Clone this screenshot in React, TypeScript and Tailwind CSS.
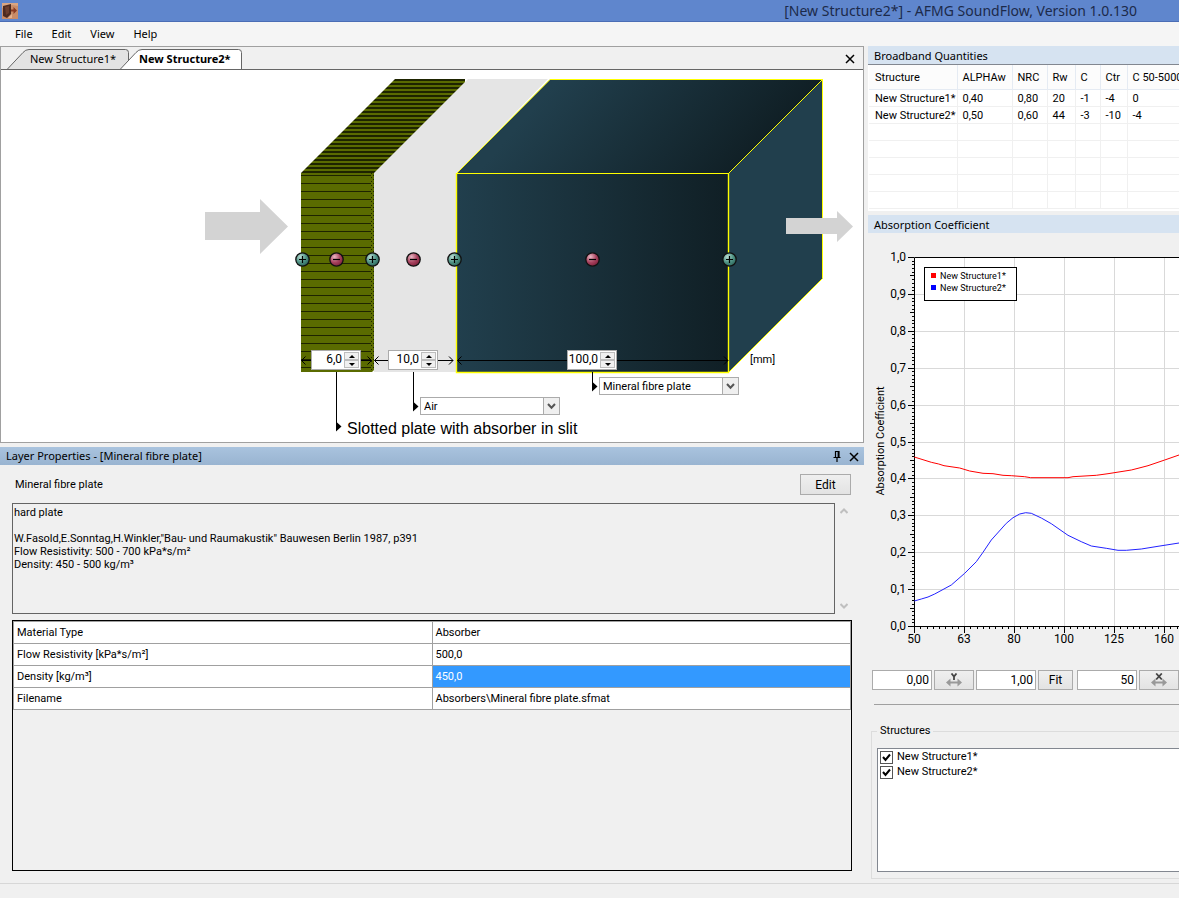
import React from "react";

const layers = [
  { name: "layer1", value: "6,0", at: "left-[310px]" },
  { name: "layer2", value: "10,0", at: "left-[387px]" },
  { name: "layer3", value: "100,0", at: "left-[566px]" },
];

const quantities = [
  ["New Structure1*", "0,40", "0,80", "20", "-1", "-4", "0"],
  ["New Structure2*", "0,50", "0,60", "44", "-3", "-10", "-4"],
  ["", "", "", "", "", "", ""],
  ["", "", "", "", "", "", ""],
  ["", "", "", "", "", "", ""],
  ["", "", "", "", "", "", ""],
  ["", "", "", "", "", "", ""],
];

const properties = [
  ["Material Type", "Absorber"],
  ["Flow Resistivity [kPa*s/m²]", "500,0"],
  ["Density [kg/m³]", "450,0"],
  ["Filename", "Absorbers\\Mineral fibre plate.sfmat"],
];

const description =
  'hard plate\n\nW.Fasold,E.Sonntag,H.Winkler,"Bau- und Raumakustik" Bauwesen Berlin 1987, p391\nFlow Resistivity: 500 - 700 kPa*s/m²\nDensity: 450 - 500 kg/m³';

const range = (n: number) => Array.from({ length: n }, (_, i) => i);

function Cross({ label }: { label: string }) {
  return (
    <button aria-label={label} className="flex size-4 items-center justify-center">
      <svg width="10" height="10" viewBox="0 0 10 10">
        <path d="M1 1L9 9M9 1L1 9" stroke="#000" strokeWidth="1.5" fill="none" />
      </svg>
    </button>
  );
}

function TabShape({ active }: { active?: boolean }) {
  return (
    <svg className="absolute inset-0" width="122" height="20" viewBox="0 0 122 20">
      <path
        d="M0.5 20L16 3.5Q18.500 0.500 22 0.500H118.500Q121.500 0.500 121.500 3.500V20"
        fill={active ? "#fff" : "#e3e3e3"}
        stroke="#666"
      />
    </svg>
  );
}

function Spinner({ name, value, at }: { name: string; value: string; at: string }) {
  return (
    <div className={`absolute top-[280px] flex h-5 w-[50px] border border-[#ababab] bg-white ${at}`}>
      <input
        aria-label={`Thickness ${name}`}
        defaultValue={value}
        className="w-0 min-w-0 flex-1 bg-white pr-0.5 pb-0.5 text-right text-[12px] outline-none"
      />
      <div className="flex w-4 flex-col py-px pr-px">
        <button aria-label="Increase" className="flex flex-1 items-center justify-center border border-[#bdbdbd] bg-[#f0f0f0]">
          <svg width="6" height="3" viewBox="0 0 6 3"><path d="M0 3L3 0L6 3z" /></svg>
        </button>
        <button aria-label="Decrease" className="flex flex-1 items-center justify-center border border-[#bdbdbd] bg-[#f0f0f0]">
          <svg width="6" height="3" viewBox="0 0 6 3"><path d="M0 0L3 3L6 0z" /></svg>
        </button>
      </div>
    </div>
  );
}

function Combo({ value, at }: { value: string; at: string }) {
  return (
    <div className={`absolute h-[18px] w-[140px] ${at}`}>
      <select
        aria-label="Layer material"
        defaultValue={value}
        className="h-full w-full appearance-none border border-[#ababab] bg-white pt-px pl-[3px] text-[11px] leading-4 outline-none"
      >
        <option>{value}</option>
      </select>
      <div className="pointer-events-none absolute inset-y-px right-px flex w-4 items-center justify-center border-l border-[#ababab] bg-[#efefef]">
        <svg width="9" height="7" viewBox="0 0 9 7">
          <path d="M1 1L4.500 4.800L8 1" fill="none" stroke="#555" strokeWidth="2" />
        </svg>
      </div>
    </div>
  );
}

function Ball({ x, plus }: { x: number; plus?: boolean }) {
  return (
    <g>
      <circle cx={x} cy={259.5} r={6.7} fill={plus ? "url(#green)" : "url(#red)"} stroke="#111" strokeWidth="1.3" />
      <path d={`M${x - 3.5} 259.5h7${plus ? `M${x} 256v7` : ""}`} stroke="#000" strokeWidth="1.200" fill="none" />
    </g>
  );
}

function Dimension({ from, to }: { from: number; to: number }) {
  return (
    <path
      d={`M${from} 360.5H${to}M${from + 4} 356.5L${from} 360.5L${from + 4} 364.5M${to - 4} 356.5L${to} 360.5L${to - 4} 364.5`}
      fill="none"
      stroke="#000"
    />
  );
}

function Drawing() {
  return (
    <svg className="block" width="862" height="372" viewBox="1 70 862 372" role="img" aria-label="Layer structure">
      <defs>
        <linearGradient id="front"><stop stopColor="#213f4d" /><stop offset="1" stopColor="#101f25" /></linearGradient>
        <linearGradient id="top" gradientUnits="userSpaceOnUse" x1="575" y1="60" x2="725" y2="190">
          <stop stopColor="#213f4d" /><stop offset="1" stopColor="#101f25" />
        </linearGradient>
        <radialGradient id="green" cx="0.35" cy="0.3" r="0.75"><stop stopColor="#b9dcd2" /><stop offset="0.55" stopColor="#4f9385" /><stop offset="1" stopColor="#2c6459" /></radialGradient>
        <radialGradient id="red" cx="0.35" cy="0.3" r="0.75"><stop stopColor="#eab8c4" /><stop offset="0.55" stopColor="#a94460" /><stop offset="1" stopColor="#7c1e3a" /></radialGradient>
        <pattern id="slots" width="8" height="4" patternUnits="userSpaceOnUse" y="79">
          <rect width="8" height="4" fill="#5a6b00" /><rect width="8" height="2" fill="#1e2400" />
        </pattern>
      </defs>
      <path d="M205 212H260V199L288 226.500L260 254V240H205z" fill="#d3d3d3" />
      <path d="M374 173L468 79H548L457 173V372H374z" fill="#e5e5e5" />
      <path d="M301 173L395 79H465V82L374 173z" fill="url(#slots)" />
      <path d="M301 173H374V370L372 372H301z" fill="#5a6b00" />
      {range(25).map((i) => (
        <path key={i} d={`M301 ${175.5 + i * 8}H371`} stroke="#1e2400" />
      ))}
      <path d="M371.500 173V372" stroke="#1e2400" strokeDasharray="1 3" />
      <path d="M373.500 175V370" stroke="#1e2400" strokeDasharray="1 3" />
      <path d="M457 173L550 79.500H822.500L729 173z" fill="url(#top)" />
      <path d="M729 173L822.500 79.500V278.500L729 372z" fill="#213f4d" />
      <rect x="456.500" y="173.500" width="272" height="199" fill="url(#front)" />
      <path d="M457 173L550 79.500H822.500V278.500L729 372M729 173L822.500 79.500M456.500 173.500H728.500" fill="none" stroke="#ff0" />
      <path d="M456.500 173V372.500H728.500V173" fill="none" stroke="#ff0" strokeWidth="1.400" />
      <path d="M786 218H837V211L853 226.500L837 242V234H786z" fill="#d3d3d3" />
      <Ball x={302.5} plus />
      <Ball x={336.5} />
      <Ball x={372.5} plus />
      <Ball x={413.5} />
      <Ball x={454.5} plus />
      <Ball x={592.5} />
      <Ball x={729.5} plus />
      <Dimension from={301.5} to={371.5} />
      <Dimension from={374.5} to={453} />
      <Dimension from={457.5} to={728} />
      <path d="M336.500 372V427M413.500 372V406M592.500 372V386" stroke="#000" />
      <path d="M336 421.500L341.500 426.500L336 431.500zM413 401.500L418.500 406.500L413 411.500zM592 381.500L597.500 386.500L592 391.500z" />
      <text x="347" y="434" className="font-['Liberation_Sans'] text-[16px]">Slotted plate with absorber in slit</text>
      <text x="750" y="363" className="text-[11px]">[mm]</text>
    </svg>
  );
}

const pts = (p: number[][]) => p.map(([x, y]) => `${(x / 3 + 868).toFixed(1)},${(y / 3 + 440).toFixed(1)}`).join(" ");

const red = pts([[139, 51], [190, 67], [212, 72], [228, 77], [275, 84], [305, 93], [345, 100], [375, 101], [405, 106], [430, 107], [470, 110], [488, 113], [600, 113], [615, 110], [685, 106], [720, 101], [790, 90], [810, 85], [840, 77], [890, 60], [933, 45]]);
const blue = pts([[139, 483], [160, 477], [180, 471], [200, 462], [250, 435], [290, 400], [325, 365], [345, 337], [370, 300], [415, 250], [435, 233], [455, 222], [473, 218], [490, 220], [520, 234], [550, 251], [600, 286], [640, 305], [670, 318], [715, 325], [750, 331], [775, 331], [820, 327], [870, 319], [933, 309]]);

function Chart() {
  return (
    <svg className="block" width="311" height="437" viewBox="868 233 311 437" role="img" aria-label="Absorption coefficient over frequency">
      <rect x="914" y="257" width="265" height="370" fill="#fff" />
      {range(9).map((i) => (
        <path key={i} d={`M915 ${Math.round(257 + (i + 1) * 36.9) + 0.5}H1179`} stroke="#d9d9d9" />
      ))}
      {range(5).map((i) => (
        <path key={i} d={`M${964.5 + i * 50} 258V626`} stroke="#d9d9d9" />
      ))}
      {range(101).map((i) => (
        <path key={i} d={`M${i % 10 === 0 ? 908 : i % 5 === 0 ? 910 : 912} ${Math.round(257 + i * 3.69) + 0.5}H914`} stroke="#000" />
      ))}
      {range(43).map((i) => (
        <path key={i} d={`M${Math.round(914 + i * 6.25) + 0.5} 626V${i % 8 === 0 ? 633 : 629}`} stroke="#000" />
      ))}
      <path d="M1179 257.500H914.500V626.500H1179" fill="none" stroke="#000" />
      <polyline points={red} fill="none" stroke="#f00" />
      <polyline points={blue} fill="none" stroke="#22f" />
      {range(11).map((i) => (
        <text key={i} x="906" y={Math.round(261 + i * 36.9)} textAnchor="end" className="text-[12px]">
          {((10 - i) / 10).toFixed(1).replace(".", ",")}
        </text>
      ))}
      {["50", "63", "80", "100", "125", "160"].map((t, i) => (
        <text key={t} x={914 + i * 50} y="643" textAnchor="middle" className="text-[12px]">{t}</text>
      ))}
      <text transform="translate(884 441) rotate(-90)" textAnchor="middle" className="text-[11px]">Absorption Coefficient</text>
      <rect x="924.500" y="267.500" width="92" height="33" fill="#fff" stroke="#000" />
      <rect x="931" y="273" width="5" height="5" fill="#f00" />
      <rect x="931" y="285" width="5" height="5" fill="#00f" />
      <text x="940" y="279" className="text-[9px]">New Structure1*</text>
      <text x="940" y="291" className="text-[9px]">New Structure2*</text>
    </svg>
  );
}

function AxisButton({ axis }: { axis: "X" | "Y" }) {
  return (
    <button aria-label={`Rescale ${axis} axis`} className="flex w-10 shrink-0 items-center justify-center border border-[#ababab] bg-linear-to-b from-[#efefef] to-[#e3e3e3]">
      <svg width="16" height="14" viewBox="0 0 16 14">
        <path d="M0 9.500L4.500 5.500V8.500H11.500V5.500L16 9.500L11.500 13.500V10.500H4.500V13.500z" fill="#999" />
        <path d={axis === "Y" ? "M5.500 0.500L8 3.500L10.500 0.500M8 3.500V7" : "M5.200 0.500L10.800 6.500M10.800 0.500L5.200 6.500"} stroke="#444" strokeWidth="1.800" fill="none" />
      </svg>
    </button>
  );
}

function NumberBox({ label, value }: { label: string; value: string }) {
  return (
    <input aria-label={label} defaultValue={value} className="w-[60px] shrink-0 border border-[#ababab] bg-white pr-0.5 text-right text-[12px] outline-none" />
  );
}

function PanelTitle({ children }: { children: React.ReactNode }) {
  return <h2 className="h-[18px] shrink-0 bg-[#d6e3f1] pl-1.5 font-['Noto_Sans',sans-serif] text-[11px] leading-5">{children}</h2>;
}

function CheckItem({ label }: { label: string }) {
  return (
    <label className="flex h-[15px] items-center gap-1">
      <span className="relative flex size-[13px]">
        <input type="checkbox" defaultChecked className="peer size-[13px] appearance-none border border-[#555] bg-white" />
        <svg className="pointer-events-none absolute inset-0 hidden peer-checked:block" width="13" height="13" viewBox="0 0 13 13">
          <path d="M3 6L5.500 9L10 3.500" fill="none" stroke="#000" strokeWidth="2" />
        </svg>
      </span>
      {label}
    </label>
  );
}

export default function App() {
  return (
    <div className="flex min-h-screen flex-col overflow-hidden bg-[#f0f0f0] font-[Roboto,sans-serif] text-[11px] text-black">
      <header className="flex h-[22px] shrink-0 items-center justify-between border-b border-[#4a6db5] bg-[#5f86cd] pl-0.5 pr-[42px]">
        <svg width="16" height="16" viewBox="0 0 16 16">
          <rect width="16" height="16" fill="#c98c68" />
          <path d="M0 0H16V3L10 2L0 5z" fill="#d9a582" />
          <path d="M1 3L9 1V11L5 15L1 13z" fill="#4c2a20" />
          <path d="M3 4L7 3V10L4 12z" fill="#6b3c2c" />
          <path d="M9 6.500H11.500V4L15 7.500L11.500 11V8.500H9z" fill="#8a3a22" />
          <path d="M6 15L10 11V15z" fill="#e3b18e" />
        </svg>
        <h1 className="font-['Noto_Sans',sans-serif] text-[14px] leading-5 text-[#1c2a4a]">[New Structure2*] - AFMG SoundFlow, Version 1.0.130</h1>
      </header>

      <nav className="flex h-6 shrink-0 items-center gap-[19px] bg-[#f5f5f5] pl-[15px] font-['Noto_Sans',sans-serif] text-[11px]">
        <button>File</button>
        <button>Edit</button>
        <button>View</button>
        <button>Help</button>
      </nav>

      <div className="flex flex-1">
        <main className="flex min-w-0 flex-1 flex-col">
          <section className="shrink-0 overflow-hidden border border-[#a0a0a0]">
            <div className="flex h-[23px] items-end justify-between border-b border-[#666] pl-1.5 pr-[5px]">
              <div className="flex font-['Noto_Sans',sans-serif] text-[11px]">
                <button className="relative h-5 w-[122px] pl-[23px] text-left">
                  <TabShape />
                  <span className="relative">New Structure1*</span>
                </button>
                <button className="relative -mb-px -ml-[9px] h-[21px] w-[122px] pb-px pl-[19px] text-left font-bold">
                  <TabShape active />
                  <span className="relative">New Structure2*</span>
                </button>
              </div>
              <div className="flex h-full items-end pb-0.5"><Cross label="Close document" /></div>
            </div>
            <div className="relative h-[372px] bg-white">
              <Drawing />
              {layers.map((l) => (
                <Spinner key={l.name} {...l} />
              ))}
              <Combo value="Air" at="left-[419px] top-[327px]" />
              <Combo value="Mineral fibre plate" at="left-[598px] top-[307px]" />
            </div>
          </section>

          <section className="mt-1 flex flex-1 flex-col">
            <div className="flex h-[18px] shrink-0 items-center justify-between bg-linear-to-b from-[#a9c3de] to-[#99b4d1] pt-px pl-1.5 pr-0.5">
              <h2 className="font-['Noto_Sans',sans-serif] text-[11px]">Layer Properties - [Mineral fibre plate]</h2>
              <div className="flex items-center gap-px">
                <button aria-label="Pin panel" className="flex size-4 items-center justify-center">
                  <svg width="8" height="11" viewBox="0 0 8 11">
                    <path d="M2 0.500H6V6M2.500 0V6M5.200 0V6M0.500 6.500H7.500M4 6.500V11" fill="none" stroke="#000" strokeWidth="1.200" />
                  </svg>
                </button>
                <Cross label="Close panel" />
              </div>
            </div>
            <div className="flex flex-1 flex-col pt-[9px] pr-3 pb-3 pl-3">
              <div className="flex h-[21px] items-center justify-between pl-[3px] pr-px">
                <span className="pt-0.5">Mineral fibre plate</span>
                <button className="h-[21px] w-[51px] border border-[#ababab] bg-linear-to-b from-[#efefef] to-[#e3e3e3] text-[12px]">Edit</button>
              </div>
              <div className="mt-2 flex h-[111px]">
                <textarea
                  readOnly
                  aria-label="Material description"
                  defaultValue={description}
                  className="flex-1 resize-none border border-[#646464] px-px py-0.5 text-[11px] leading-[13px] outline-none"
                />
                <div className="flex w-[17px] flex-col items-center justify-between py-1">
                  <button aria-label="Scroll up">
                    <svg width="8" height="8" viewBox="0 0 8 8"><path d="M0.500 6L4 2.500L7.500 6" fill="none" stroke="#bfbfbf" strokeWidth="2" /></svg>
                  </button>
                  <button aria-label="Scroll down">
                    <svg width="8" height="8" viewBox="0 0 8 8"><path d="M0.500 2L4 5.500L7.500 2" fill="none" stroke="#bfbfbf" strokeWidth="2" /></svg>
                  </button>
                </div>
              </div>
              <div className="mt-1.5 flex-1 border border-black">
                <table className="w-full table-fixed border-collapse">
                  <tbody>
                    {properties.map(([k, v]) => (
                      <tr key={k} className="h-[22px]">
                        <th scope="row" className="border border-[#a0a0a0] bg-white px-[3px] pt-0.5 pb-0 text-left font-normal">{k}</th>
                        <td className={`border border-[#a0a0a0] px-[3px] pt-0.5 pb-0 ${v === "450,0" ? "bg-[#3399ff] text-white" : "bg-white"}`}>{v}</td>
                      </tr>
                    ))}
                  </tbody>
                </table>
              </div>
            </div>
          </section>
        </main>

        <aside className="ml-1 flex w-[311px] shrink-0 flex-col overflow-hidden">
          <PanelTitle>Broadband Quantities</PanelTitle>
          <div className="h-[147px] shrink-0 overflow-hidden border-t border-[#828790] bg-white pl-px">
            <table className="w-[400px] table-fixed border-collapse whitespace-nowrap">
              <thead>
                <tr className="h-6 bg-[#fcfcfc]">
                  <th className="w-[88px] border-r border-b border-[#e5ebf3] pt-0.5 pb-0 pl-1.5 text-left font-normal">Structure</th>
                  <th className="w-[55px] border-r border-b border-[#e5ebf3] pt-0.5 pb-0 pl-[5px] text-left font-normal">ALPHAw</th>
                  <th className="w-[35px] border-r border-b border-[#e5ebf3] pt-0.5 pb-0 pl-[5px] text-left font-normal">NRC</th>
                  <th className="w-[28px] border-r border-b border-[#e5ebf3] pt-0.5 pb-0 pl-[5px] text-left font-normal">Rw</th>
                  <th className="w-[25px] border-r border-b border-[#e5ebf3] pt-0.5 pb-0 pl-[5px] text-left font-normal">C</th>
                  <th className="w-[27px] border-r border-b border-[#e5ebf3] pt-0.5 pb-0 pl-[5px] text-left font-normal">Ctr</th>
                  <th className="border-r border-b border-[#e5ebf3] pt-0.5 pb-0 pl-[5px] text-left font-normal">C 50-5000</th>
                </tr>
              </thead>
              <tbody>
                {quantities.map((row, r) => (
                  <tr key={r} className="h-[17px]">
                    {row.map((cell, c) => (
                      <td key={c} className="border-r border-b border-[#f0f0f0] p-0 pt-0.5 pl-[5px] leading-3 first:pl-1.5">{cell}</td>
                    ))}
                  </tr>
                ))}
              </tbody>
            </table>
          </div>
          <div className="mt-1 flex flex-col">
            <PanelTitle>Absorption Coefficient</PanelTitle>
            <Chart />
          </div>
          <div className="flex h-5 shrink-0 gap-0.5 pl-1">
            <NumberBox label="Y minimum" value="0,00" />
            <AxisButton axis="Y" />
            <NumberBox label="Y maximum" value="1,00" />
            <button className="mr-0.5 w-[35px] shrink-0 border border-[#ababab] bg-linear-to-b from-[#efefef] to-[#e3e3e3] text-[12px]">Fit</button>
            <NumberBox label="X minimum" value="50" />
            <AxisButton axis="X" />
          </div>
          <hr className="mt-3.5 ml-1.5 border-t border-[#a0a0a0]" />
          <fieldset className="mt-[18px] mb-1 ml-[3px] flex flex-1 flex-col border-y border-l border-[#dcdcdc] pb-1.5 pl-[5px]">
            <legend className="px-[3px]">Structures</legend>
            <div className="mt-2 flex-1 border-y border-l border-[#828790] bg-white pt-px pl-0.5">
              <CheckItem label="New Structure1*" />
              <CheckItem label="New Structure2*" />
            </div>
          </fieldset>
        </aside>
      </div>

      <footer className="h-[15px] shrink-0 border-t border-[#d7d7d7]" />
    </div>
  );
}
